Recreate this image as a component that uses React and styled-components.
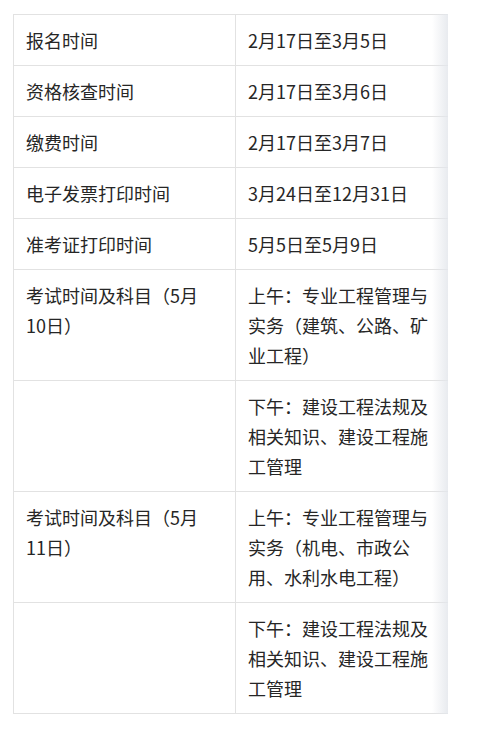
import React from 'react';
import styled, { createGlobalStyle } from 'styled-components';

const GlobalStyle = createGlobalStyle`
	body {
		margin: 0;
		background: #ffffff;
		font-family: "Noto Sans CJK SC", "Noto Sans", sans-serif;
	}
`;

const Page = styled.div`
	padding: 14px 0 0 13px;
`;

const ScrollBox = styled.div`
	position: relative;
	width: 435px;
	overflow: hidden;
`;

const Shade = styled.div`
	position: absolute;
	top: 0;
	right: 0;
	bottom: 0;
	width: 16px;
	background: linear-gradient(to right, rgba(228, 231, 236, 0), rgba(228, 231, 236, 0.85));
	pointer-events: none;
`;

const Table = styled.table`
	width: 435px;
	border-collapse: collapse;
	table-layout: fixed;
	color: #262626;
	font-size: 18px;
	line-height: 30px;
`;

const Cell = styled.td`
	width: ${props => (props.wide ? '222px' : '213px')};
	box-sizing: border-box;
	padding: 10px 12px;
	vertical-align: top;
	border-top: 1px solid #e2e2e2;
	border-bottom: 1px solid #e2e2e2;
	border-left: 1px solid #e2e2e2;
	border-right: ${props => (props.wide ? '1px solid #e2e2e2' : 'none')};
`;

const NoBreak = styled.span`
	white-space: nowrap;
`;

const rows = [
	['报名时间', '2月17日至3月5日'],
	['资格核查时间', '2月17日至3月6日'],
	['缴费时间', '2月17日至3月7日'],
	['电子发票打印时间', '3月24日至12月31日'],
	['准考证打印时间', '5月5日至5月9日'],
	[<>考试时间及科目（5月<NoBreak>10日）</NoBreak></>, '上午：专业工程管理与实务（建筑、公路、矿业工程）'],
	['', '下午：建设工程法规及相关知识、建设工程施工管理'],
	[<>考试时间及科目（5月<NoBreak>11日）</NoBreak></>, '上午：专业工程管理与实务（机电、市政公用、水利水电工程）'],
	['', '下午：建设工程法规及相关知识、建设工程施工管理'],
];

const App = () => (
	<Page>
		<GlobalStyle />
		<ScrollBox>
			<Table>
				<tbody>
					{rows.map((row, index) => (
						<tr key={index}>
							<Cell wide>{row[0]}</Cell>
							<Cell>{row[1]}</Cell>
						</tr>
					))}
				</tbody>
			</Table>
			<Shade />
		</ScrollBox>
	</Page>
);

export default App;
